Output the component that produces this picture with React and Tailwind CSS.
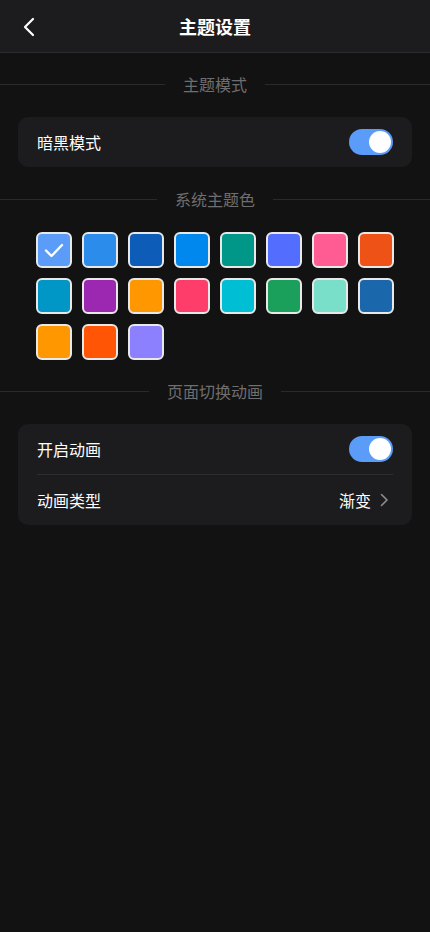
import React from "react";

const colors = [
  "#5b9cf8", "#2b8ceb", "#0c5cb8", "#0088ee", "#009688", "#536dfe", "#ff5c93", "#ef5216",
  "#0097c7", "#9c27b0", "#ff9800", "#ff3d6b", "#00bfd4", "#1ba05b", "#7adfc8", "#1a67ac",
  "#ff9800", "#ff5505", "#8c80ff",
];

function Divider({ label }) {
  return (
    <div className="flex items-center h-[30px]">
      <div className="flex-1 h-px bg-[#2a2a2c]" />
      <div className="px-[18px] text-[16px] text-[#6e6e70] leading-none">{label}</div>
      <div className="flex-1 h-px bg-[#2a2a2c]" />
    </div>
  );
}

function Toggle() {
  return (
    <div className="w-[44px] h-[26px] rounded-full bg-[#5b9cf8] flex items-center justify-end pr-[2px]">
      <div className="w-[22px] h-[22px] rounded-full bg-white" />
    </div>
  );
}

export default function App() {
  return (
    <div
      className="w-[430px] h-[932px] bg-[#121212] text-white overflow-hidden"
      style={{ fontFamily: '"Noto Sans CJK SC", "Noto Sans", sans-serif' }}
    >
      <div className="relative h-[53px] bg-[#1c1c1e] border-b border-[#2c2c2e] flex items-center justify-center">
        <svg className="absolute left-[20px] top-[16px]" width="18" height="22" viewBox="0 0 18 22" fill="none">
          <path d="M13 3 L5 11 L13 19" stroke="#ffffff" strokeWidth="2.2" strokeLinecap="round" strokeLinejoin="round" />
        </svg>
        <div className="text-[18px] font-bold leading-none">主题设置</div>
      </div>

      <div className="mt-[16px]">
        <Divider label="主题模式" />
      </div>

      <div className="mx-[18px] mt-[18px] h-[50px] rounded-[10px] bg-[#1c1c1e] flex items-center justify-between pl-[19px] pr-[19px]">
        <span className="text-[16px] leading-none">暗黑模式</span>
        <Toggle />
      </div>

      <div className="mt-[17px]">
        <Divider label="系统主题色" />
      </div>

      <div className="mt-[18px] pl-[36px] grid grid-cols-[repeat(8,36px)] gap-[10px]">
        {colors.map((c, i) => (
          <div
            key={i}
            className="w-[36px] h-[36px] rounded-[6px] border-2 border-[#e8e8e8] flex items-center justify-center"
            style={{ backgroundColor: c }}
          >
            {i === 0 && (
              <svg width="20" height="16" viewBox="0 0 20 16" fill="none">
                <path d="M2 8.5 L7.5 14 L18 3" stroke="#ffffff" strokeWidth="2.4" strokeLinecap="round" strokeLinejoin="round" />
              </svg>
            )}
          </div>
        ))}
      </div>

      <div className="mt-[16px]">
        <Divider label="页面切换动画" />
      </div>

      <div className="mx-[18px] mt-[18px] rounded-[10px] bg-[#1c1c1e] px-[19px]">
        <div className="h-[50px] flex items-center justify-between">
          <span className="text-[16px] leading-none">开启动画</span>
          <Toggle />
        </div>
        <div className="h-px bg-[#2e2e30]" />
        <div className="h-[50px] flex items-center justify-between">
          <span className="text-[16px] leading-none">动画类型</span>
          <div className="flex items-center mr-[5px]">
            <span className="text-[16px] leading-none">渐变</span>
            <svg className="ml-[9px]" width="8" height="14" viewBox="0 0 8 14" fill="none">
              <path d="M1.5 1.5 L7 7 L1.5 12.5" stroke="#8e8e90" strokeWidth="1.6" strokeLinecap="round" strokeLinejoin="round" />
            </svg>
          </div>
        </div>
      </div>
    </div>
  );
}
